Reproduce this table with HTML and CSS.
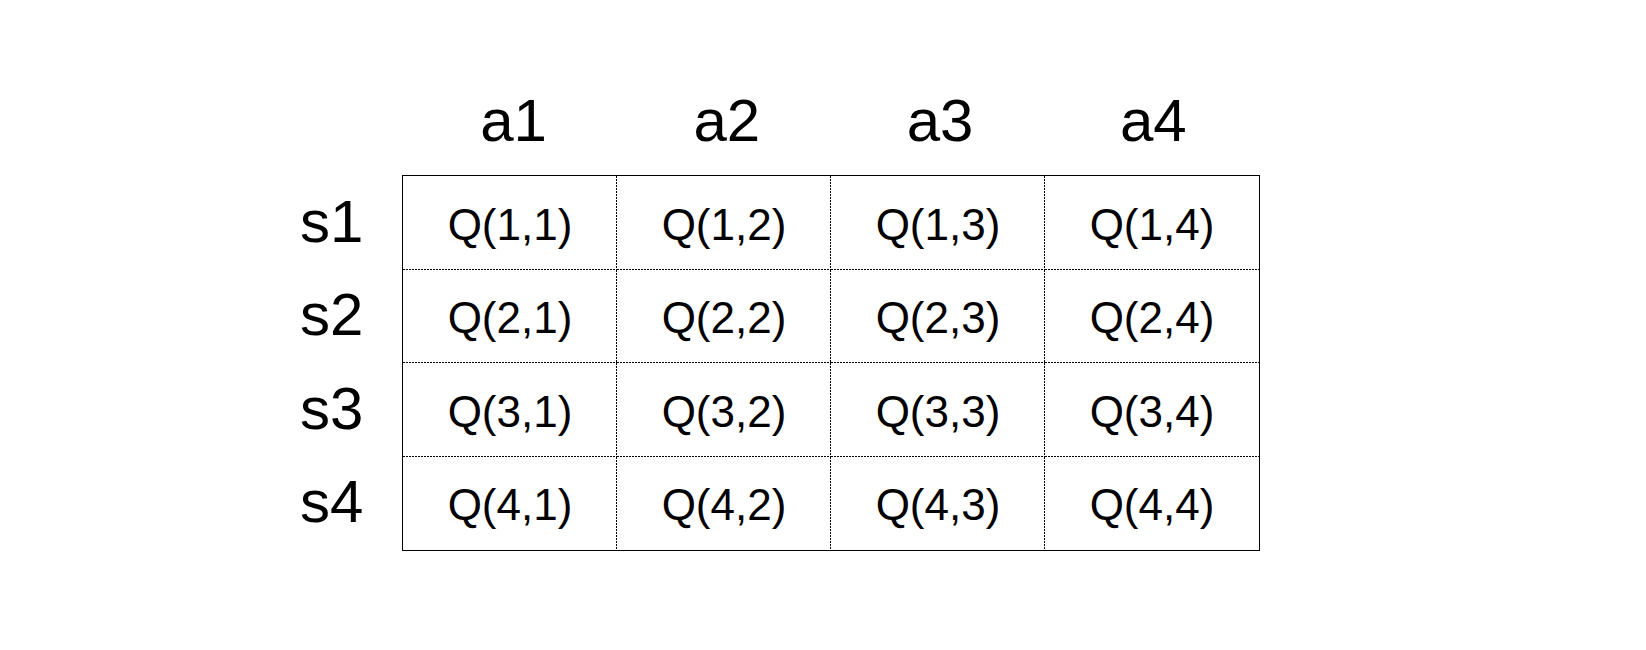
FILE: index.html
```html
<!DOCTYPE html>
<html>
<head>
<meta charset="utf-8">
<link rel="stylesheet" href="styles.css">
</head>
<body>
<div class="page">
  <div class="layout">
    <div class="corner"></div>
    <div class="heads">
      <div class="head">a1</div>
      <div class="head">a2</div>
      <div class="head">a3</div>
      <div class="head">a4</div>
    </div>
    <div class="labels">
      <div class="label">s1</div>
      <div class="label">s2</div>
      <div class="label">s3</div>
      <div class="label">s4</div>
    </div>
    <div class="table">
      <div class="cell">Q(1,1)</div><div class="cell">Q(1,2)</div><div class="cell">Q(1,3)</div><div class="cell">Q(1,4)</div>
      <div class="cell">Q(2,1)</div><div class="cell">Q(2,2)</div><div class="cell">Q(2,3)</div><div class="cell">Q(2,4)</div>
      <div class="cell">Q(3,1)</div><div class="cell">Q(3,2)</div><div class="cell">Q(3,3)</div><div class="cell">Q(3,4)</div>
      <div class="cell">Q(4,1)</div><div class="cell">Q(4,2)</div><div class="cell">Q(4,3)</div><div class="cell">Q(4,4)</div>
    </div>
  </div>
</div>
</body>
</html>
```

FILE: styles.css
```css
html, body {
  margin: 0;
  padding: 0;
  background: #fff;
}
body {
  width: 1646px;
  height: 650px;
  overflow: hidden;
  font-family: "Liberation Sans", Arial, sans-serif;
  color: #000;
}
.page {
  padding: 86px 0 0 300px;
}
.layout {
  display: grid;
  grid-template-columns: 102px 858px;
  grid-template-rows: 70px 376px;
  row-gap: 19px;
}
.heads {
  display: grid;
  grid-template-columns: repeat(4, 1fr);
  padding: 0 0 0 5px;
}
.head {
  font-size: 60px;
  line-height: 70px;
  text-align: center;
}
.labels {
  display: grid;
  grid-template-rows: repeat(4, 1fr);
  padding: 1px 0;
}
.label {
  font-size: 60px;
  line-height: 70px;
  display: flex;
  align-items: center;
  padding-bottom: 2px;
}
.table {
  box-sizing: border-box;
  border: 1px solid #000;
  display: grid;
  grid-template-columns: repeat(4, 1fr);
  grid-template-rows: repeat(4, 1fr);
}
.cell {
  font-size: 44px;
  display: flex;
  align-items: center;
  justify-content: center;
  padding-top: 4px;
  box-sizing: border-box;
  background-repeat: no-repeat;
  background-image:
    repeating-linear-gradient(to bottom, #000 0 2px, transparent 2px 3px),
    repeating-linear-gradient(to right, #000 0 2px, transparent 2px 3px);
  background-size: 1px 100%, 100% 1px;
  background-position: right top, left bottom;
}
.cell:nth-child(4n) {
  background-size: 0 0, 100% 1px;
}
.cell:nth-child(n+13) {
  background-size: 1px 100%, 0 0;
}
.cell:nth-child(16) {
  background-size: 0 0, 0 0;
}
```
